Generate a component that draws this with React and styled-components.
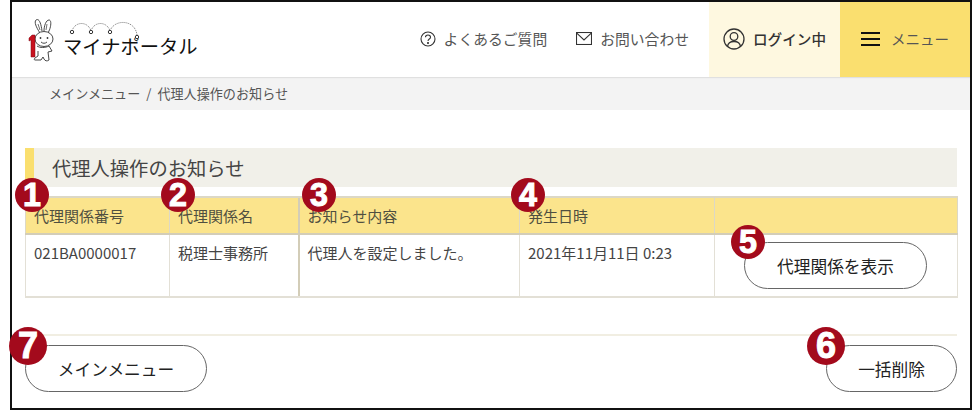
import React from "react";
import styled, { createGlobalStyle } from "styled-components";

const Global = createGlobalStyle`
  html, body { margin: 0; padding: 0; background: #fff; }
  body { font-family: "Noto Sans CJK JP", "Noto Sans", sans-serif; color: #333; }
  * { box-sizing: border-box; }
`;
const Frame = styled.div`
  position: relative;
  margin-left: 10px;
  width: 962px;
  height: 410px;
  border: 2px solid #111;
  background: #fff;
  overflow: visible;
`;
const Header = styled.header`
  display: flex;
  align-items: stretch;
  height: 75px;
  box-shadow: 0 1px 1px rgba(0,0,0,.08);
  position: relative;
`;
const Logo = styled.div`
  display: flex;
  align-items: flex-start;
  padding: 16px 0 0 16px;
  flex: 1;
`;
const LogoText = styled.div`
  position: relative;
  margin-left: 9px;
  padding-top: 14px;
  font-size: 19.3px;
  line-height: 28px;
  color: #111;
`;
const Arcs = styled.svg`
  position: absolute;
  left: 5px;
  top: 3px;
`;
const NavLink = styled.a`
  display: flex;
  align-items: center;
  gap: 8px;
  font-size: 14.8px;
  color: #555;
  margin-right: ${p => p.$mr}px;
  padding-bottom: 2px;
`;
const Block = styled.div`
  display: flex;
  align-items: center;
  justify-content: center;
  gap: ${p => p.$gap}px;
  width: ${p => p.$w}px;
  background: ${p => p.$bg};
  font-size: ${p => p.$fs}px;
  color: ${p => p.$c};
  font-weight: ${p => p.$fw || 400};
  padding-bottom: 2px;
`;
const Crumbs = styled.nav`
  height: 33px;
  background: #f3f3f3;
  display: flex;
  align-items: center;
  gap: 6px;
  padding-left: 37px;
  font-size: 13.100px;
  color: #555;
`;
const Main = styled.main`
  padding: 38px 13px 0 13px;
`;
const Title = styled.h1`
  margin: 0 0 9px;
  height: 39px;
  background: #f1f0e9;
  border-left: 9px solid #fadf6f;
  padding-left: 18px;
  display: flex;
  align-items: center;
  font-size: 19.3px;
  font-weight: 400;
  color: #444;
`;
const Table = styled.table`
  width: 100%;
  table-layout: fixed;
  border-collapse: collapse;
  font-size: 15px;
  color: #444;
`;
const Th = styled.th`
  height: 37px;
  background: #fbe48c;
  font-weight: 400;
  text-align: left;
  padding: 0 8px 0;
  line-height: 20px;
  border: 1px solid #dcd8c6;
  border-top-width: 2px;
  border-bottom: 2px solid #d3cdb8;
  color: #4f4f40;
  &:nth-child(3) { border-left: 2px solid #d3cdb8; }
`;
const Td = styled.td`
  height: 63px;
  vertical-align: top;
  padding: 8px 8px 0;
  line-height: 20px;
  border: 1px solid #e3e0d6;
  border-bottom-width: 2px;
  &:nth-child(3) { border-left: 2px solid #d3cdb8; }
`;
const ActionCell = styled(Td)`
  padding: 7px 0 0 29px;
`;
const Pill = styled.button`
  display: block;
  height: 47px;
  width: ${p => p.$w}px;
  border: 1px solid #666;
  border-radius: 24px;
  background: #fff;
  font-family: inherit;
  font-size: 16.7px;
  color: #222;
  padding: 0;
`;
const Rule = styled.hr`
  border: 0;
  border-top: 2px solid #f1eee2;
  margin: 36px 0 9px;
`;
const Footer = styled.div`
  display: flex;
  justify-content: space-between;
`;
const Badge = styled.span`
  position: absolute;
  left: ${p => p.$x - 12 - p.$r}px;
  top: ${p => p.$y - 2 - p.$r}px;
  width: ${p => p.$r * 2}px;
  height: ${p => p.$r * 2}px;
  border-radius: 50%;
  background: #a30a1c;
  color: #fff;
  display: flex;
  align-items: center;
  justify-content: center;
  font-family: "Liberation Sans", Arial, sans-serif;
  font-weight: 700;
  font-size: ${p => p.$r * 1.9}px;
  line-height: 1;
  -webkit-text-stroke: 1px #fff;
`;

const Rabbit = () => (
  <svg width="26" height="46" viewBox="0 0 26 46" fill="none" stroke="#333" strokeWidth=".9">
    <path d="M12 15C8 9 6 4 8 2c3-2 5 3 6 11" fill="#fff" />
    <path d="M16 13c0-5 2-11 5-11 3 0 2 8-1 13" fill="#fff" />
    <path d="M10 6l2 6M19 6l-1 6" strokeWidth=".7" />
    <ellipse cx="16" cy="21" rx="9" ry="7.500" fill="#fff" />
    <circle cx="12.500" cy="20" r=".9" fill="#333" stroke="none" />
    <circle cx="19.500" cy="20" r=".9" fill="#333" stroke="none" />
    <path d="M13 24c2 1.700 4 1.700 6 0" />
    <path d="M9 28c3 2 8 2 12 0l3 5-4 1 1 8c-2 1.500-4 1-5-1l-1-2-2 3H7c-1 0-1-1 0-2l3-2 0-5" fill="#fff" />
    <path d="M1 20l3-3h3v22H3V22l-2 1z" fill="#c8111e" stroke="#7c0b14" strokeWidth=".5" />
  </svg>
);
const Dots = () => (
  <Arcs width="140" height="22" viewBox="0 0 140 22" fill="none">
    <path d="M4 10C7 0 20 0 23 10M23 10C26 0 39 0 42 10M42 10C46 -2 67 -2 69 14" stroke="#777" strokeWidth="1" strokeDasharray="1 1" />
    {[[4, 11], [23, 11], [42, 11], [69, 16]].map(([x, y]) => (
      <circle key={x} cx={x} cy={y} r="1.700" fill="#fff" stroke="#333" strokeWidth="1" />
    ))}
  </Arcs>
);
const Question = () => (
  <svg width="16" height="16" viewBox="0 0 16 16" fill="none" stroke="#333" strokeWidth="1.100">
    <circle cx="8" cy="8" r="7" />
    <path d="M5.500 6.200C5.500 3.300 10.500 3.300 10.500 6.200C10.500 8 8 8 8 10" />
    <circle cx="8" cy="12" r=".5" fill="#333" />
  </svg>
);
const Mail = () => (
  <svg width="16" height="13" viewBox="0 0 16 13" fill="none" stroke="#333" strokeWidth="1.100">
    <rect x=".5" y=".5" width="15" height="12" />
    <path d="M.5 .8L8 8L15.500 .8" />
  </svg>
);
const User = () => (
  <svg width="22" height="22" viewBox="0 0 22 22" fill="none" stroke="#333" strokeWidth="1.300">
    <circle cx="11" cy="11" r="10" />
    <circle cx="11" cy="8.500" r="3.800" />
    <path d="M4.500 18.500C5 14.500 8 13.500 11 13.500s6 1 6.500 5" />
  </svg>
);
const Burger = () => (
  <svg width="19" height="14" viewBox="0 0 19 14" stroke="#111" strokeWidth="1.800">
    <path d="M0 1h19M0 7h19M0 13h19" />
  </svg>
);

export default function App() {
  return (
    <>
      <Global />
      <Frame>
        <Header>
          <Logo>
            <Rabbit />
            <LogoText>
              <Dots />
              マイナポータル
            </LogoText>
          </Logo>
          <NavLink $mr={29}><Question />よくあるご質問</NavLink>
          <NavLink $mr={20}><Mail />お問い合わせ</NavLink>
          <Block $w={131} $bg="#fef8e0" $c="#333" $gap={8} $fw={500} $fs={14.6}><User />ログイン中</Block>
          <Block $w={130} $bg="#fadf6f" $c="#555" $gap={11} $fs={14.5}><Burger />メニュー</Block>
        </Header>
        <Crumbs><span>メインメニュー</span><span>/</span><span>代理人操作のお知らせ</span></Crumbs>
        <Main>
          <Title>代理人操作のお知らせ</Title>
          <Table>
            <colgroup>
              <col style={{ width: 144 }} />
              <col style={{ width: 129 }} />
              <col style={{ width: 221 }} />
              <col style={{ width: 195 }} />
              <col style={{ width: 243 }} />
            </colgroup>
            <thead>
              <tr>
                <Th>代理関係番号</Th>
                <Th>代理関係名</Th>
                <Th>お知らせ内容</Th>
                <Th>発生日時</Th>
                <Th />
              </tr>
            </thead>
            <tbody>
              <tr>
                <Td>021BA0000017</Td>
                <Td>税理士事務所</Td>
                <Td>代理人を設定しました。</Td>
                <Td>2021年11月11日 0:23</Td>
                <ActionCell><Pill $w={183}>代理関係を表示</Pill></ActionCell>
              </tr>
            </tbody>
          </Table>
          <Rule />
          <Footer>
            <Pill $w={182}>メインメニュー</Pill>
            <Pill $w={131}>一括削除</Pill>
          </Footer>
        </Main>
        <Badge $x={32} $y={195} $r={17}>1</Badge>
        <Badge $x={178} $y={195} $r={17}>2</Badge>
        <Badge $x={319} $y={195} $r={17}>3</Badge>
        <Badge $x={528} $y={195} $r={17}>4</Badge>
        <Badge $x={748} $y={242} $r={17}>5</Badge>
        <Badge $x={826} $y={346} $r={19}>6</Badge>
        <Badge $x={28} $y={346} $r={19}>7</Badge>
      </Frame>
    </>
  );
}
